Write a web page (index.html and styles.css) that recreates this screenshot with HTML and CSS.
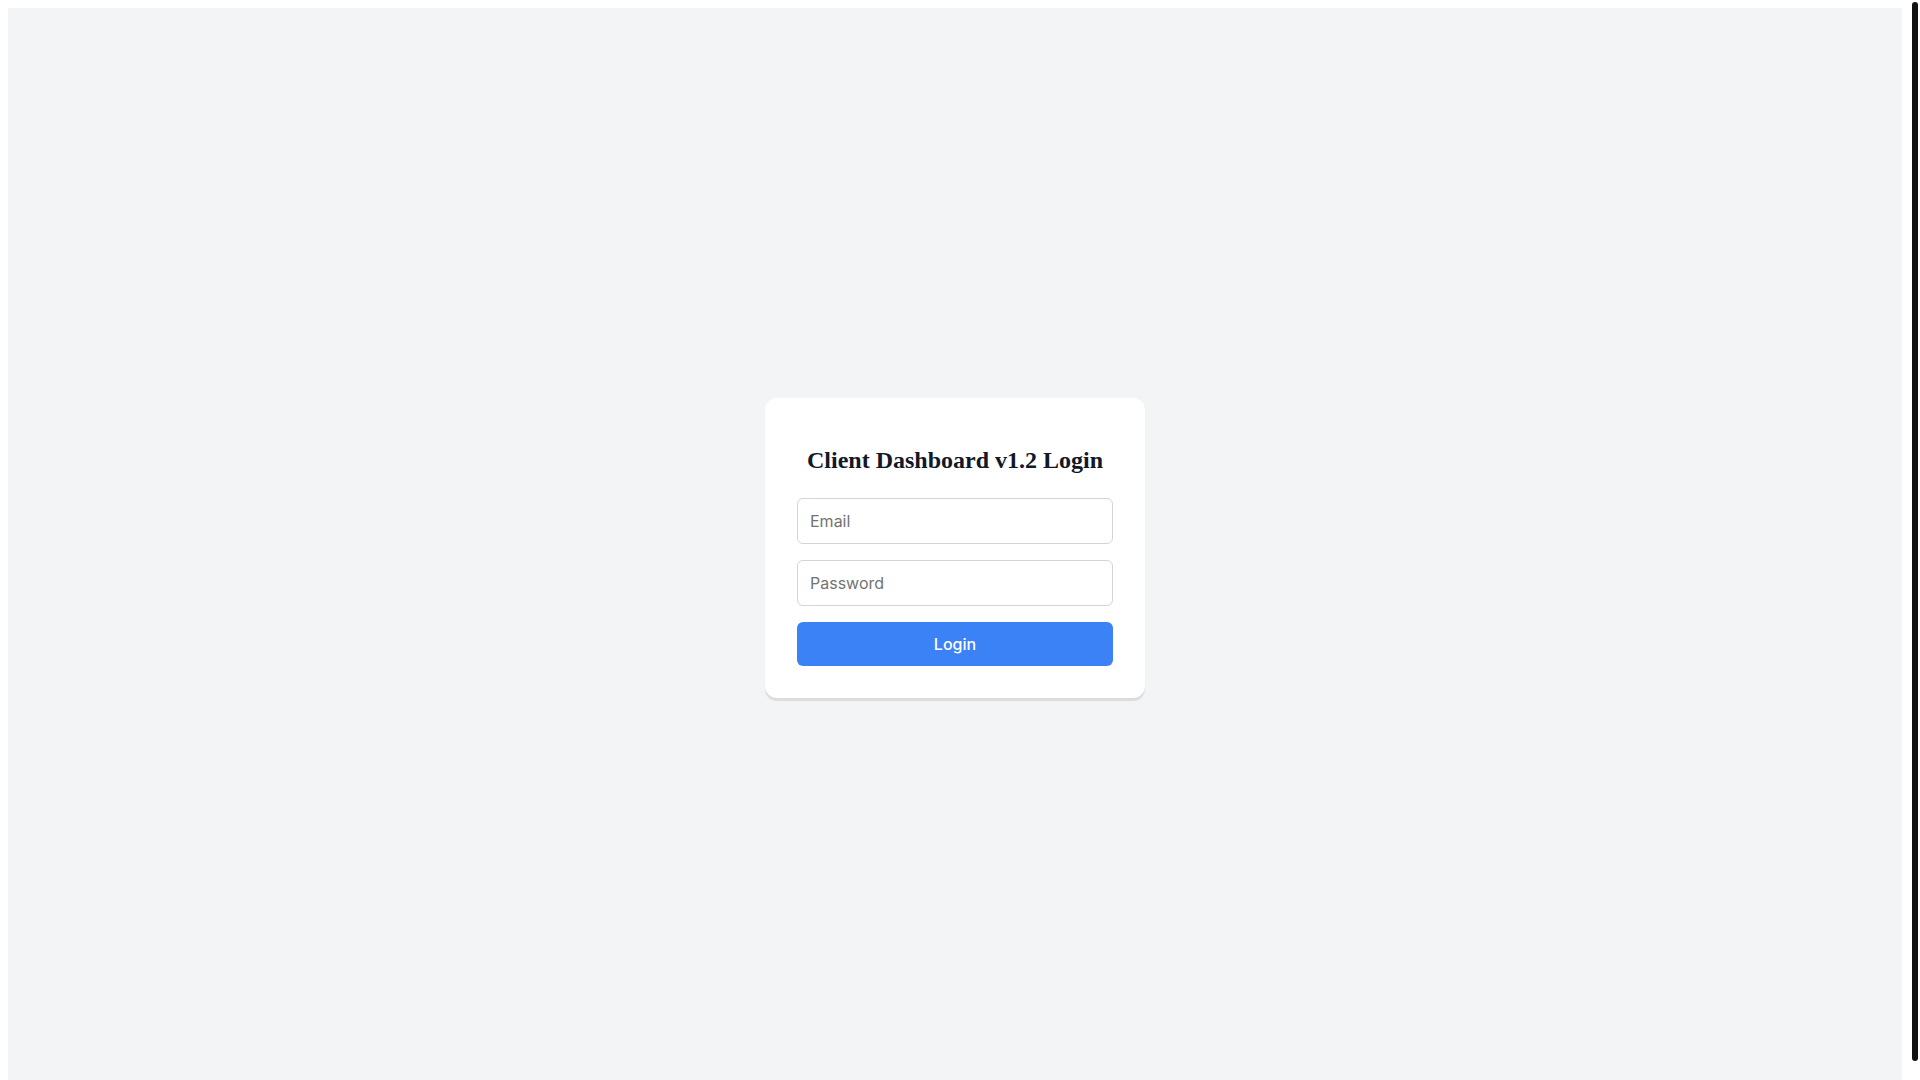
FILE: index.html
```html
<!DOCTYPE html>
<html lang="en">
<head>
    <meta charset="UTF-8">
    <meta name="viewport" content="width=device-width, initial-scale=1.0">
    <title>Client Dashboard Login</title>
    <link rel="stylesheet" href="styles.css">
</head>
<body>
    <div class="page">
        <div class="login-card">
            <h1>Client Dashboard v1.2 Login</h1>
            <form class="login-form" onsubmit="return false">
                <input type="email" placeholder="Email">
                <input type="password" placeholder="Password">
                <button type="submit">Login</button>
            </form>
        </div>
    </div>
    <div class="scroll-thumb"></div>
</body>
</html>
```

FILE: styles.css
```css
html{overflow-y:scroll}
::-webkit-scrollbar{width:10px}
::-webkit-scrollbar-track{background:#fff}
::-webkit-scrollbar-thumb{background:#111;border:2px solid #fff;border-radius:5px}
body{margin:8px 18px 8px 8px;font-family:"Liberation Serif",serif}
.page{min-height:100vh;background:#f3f4f6;display:flex;justify-content:center;align-items:center}
.scroll-thumb{position:fixed;top:2px;right:2px;width:6px;height:1059px;background:#111;border-radius:3px}
.login-card{width:380px;box-sizing:border-box;padding:32px;background:#fff;border-radius:12px;box-shadow:0 3px 1px rgba(0,0,0,0.1)}
h1{margin:17px 0 24px;font-size:24px;font-weight:bold;color:#111827;text-align:center}
.login-form{display:flex;flex-direction:column;gap:16px}
input{font-family:Inter,sans-serif;font-size:16px;padding:12px;border:1px solid #d1d5db;border-radius:6px;color:#111827;outline:none}
input::placeholder{color:#737373}
button{font-family:Inter,sans-serif;font-size:16px;font-weight:500;padding:12px;border:none;border-radius:6px;background:#3b82f6;color:#fff;cursor:pointer}
button:hover{background:#2563eb}
```
